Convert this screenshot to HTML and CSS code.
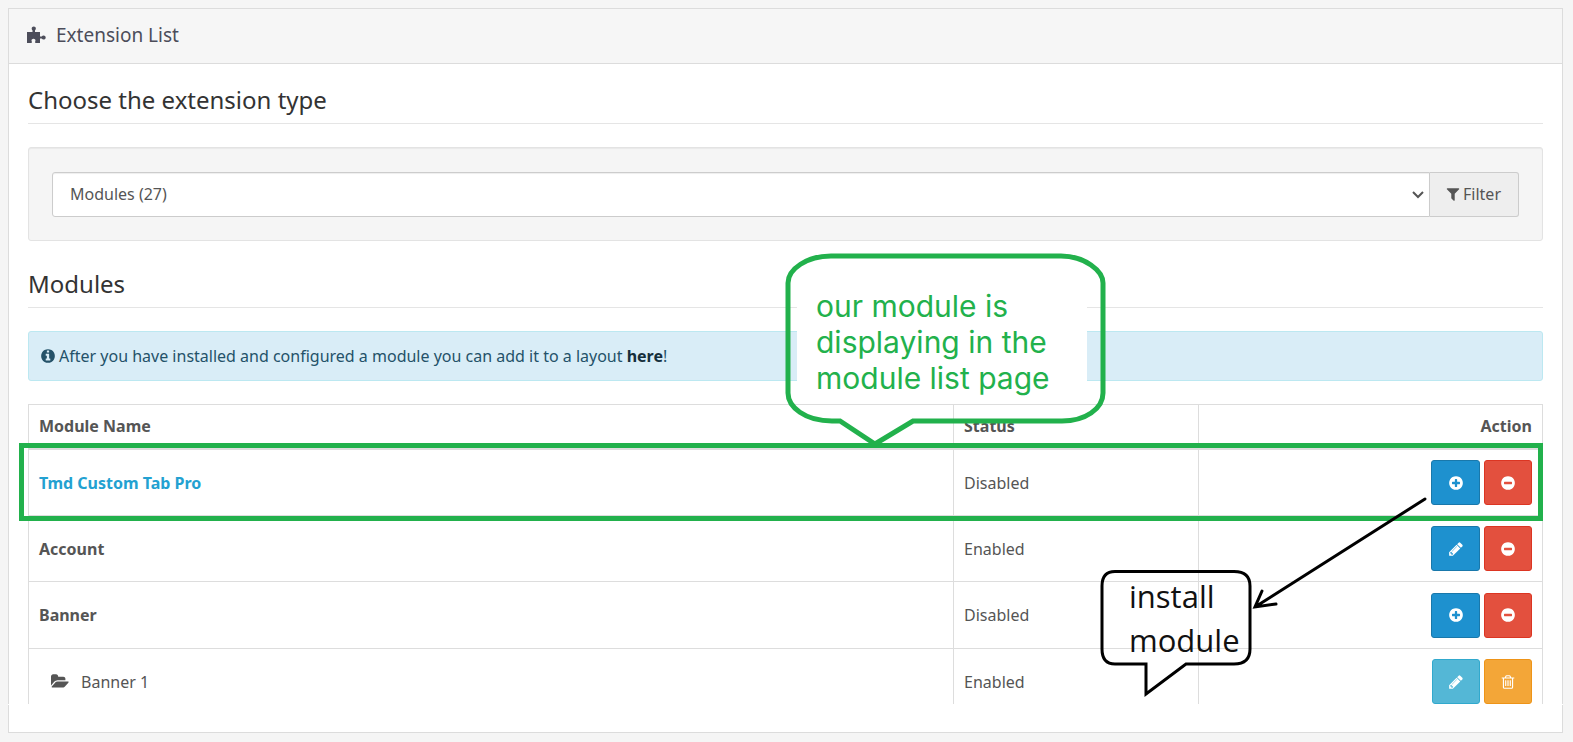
FILE: index.html
```html
<!DOCTYPE html>
<html lang="en">
<head>
<meta charset="utf-8">
<title>Extension List</title>
<link rel="stylesheet" href="styles.css">
</head>
<body>
<svg class="sprite" aria-hidden="true">
  <symbol id="plus" viewBox="0 0 1536 1792"><path d="M1216 960V832q0-26-19-45t-45-19H896V512q0-26-19-45t-45-19H704q-26 0-45 19t-19 45v256H384q-26 0-45 19t-19 45v128q0 26 19 45t45 19h256v256q0 26 19 45t45 19h128q26 0 45-19t19-45v-256h256q26 0 45-19t19-45zm320-64q0 209-103 385.500T1153.500 1561 768 1664t-385.500-103T103 1281.500 0 896t103-385.500T382.500 231 768 128t385.500 103T1433 510.500 1536 896z"/></symbol>
  <symbol id="minus" viewBox="0 0 1536 1792"><path d="M1216 960V832q0-26-19-45t-45-19H384q-26 0-45 19t-19 45v128q0 26 19 45t45 19h768q26 0 45-19t19-45zm320-64q0 209-103 385.500T1153.500 1561 768 1664t-385.500-103T103 1281.500 0 896t103-385.500T382.500 231 768 128t385.500 103T1433 510.500 1536 896z"/></symbol>
  <symbol id="pencil" viewBox="0 0 1536 1792"><path d="M363 1536l91-91-235-235-91 91v107h128v128h107zm523-928q0-22-22-22-10 0-17 7l-542 542q-7 7-7 17 0 22 22 22 10 0 17-7l542-542q7-7 7-17zm-54-192l416 416-832 832H0v-416zm683 96q0 53-37 90l-166 166-416-416 166-165q36-38 90-38 53 0 91 38l235 234q37 39 37 91z"/></symbol>
  <symbol id="trash" viewBox="0 0 1408 1792"><path d="M512 736v576q0 14-9 23t-23 9h-64q-14 0-23-9t-9-23V736q0-14 9-23t23-9h64q14 0 23 9t9 23zm256 0v576q0 14-9 23t-23 9h-64q-14 0-23-9t-9-23V736q0-14 9-23t23-9h64q14 0 23 9t9 23zm256 0v576q0 14-9 23t-23 9h-64q-14 0-23-9t-9-23V736q0-14 9-23t23-9h64q14 0 23 9t9 23zm128 724V512H256v948q0 22 7 40.500t14.500 27T288 1536h832q3 0 10.500-8.500t14.500-27 7-40.500zM480 384h448l-48-117q-7-9-17-11H546q-10 2-17 11zm928 32v64q0 14-9 23t-23 9h-96v948q0 83-47 143.500t-113 60.500H288q-66 0-113-58.500T128 1464V512H32q-14 0-23-9t-9-23v-64q0-14 9-23t23-9h309l70-167q15-37 54-63t79-26h320q40 0 79 26t54 63l70 167h309q14 0 23 9t9 23z"/></symbol>
  <symbol id="filter" viewBox="0 0 1408 1792"><path d="M1403 295q17 41-14 70L896 858v742q0 42-39 59-13 5-25 5-27 0-45-19l-256-256q-19-19-19-45V858L19 365q-31-29-14-70 17-39 59-39h1280q42 0 59 39z"/></symbol>
  <symbol id="info" viewBox="0 0 1536 1792"><path d="M1024 1376v-160q0-14-9-23t-23-9h-96V672q0-14-9-23t-23-9H544q-14 0-23 9t-9 23v160q0 14 9 23t23 9h96v320h-96q-14 0-23 9t-9 23v160q0 14 9 23t23 9h448q14 0 23-9t9-23zM896 480V320q0-14-9-23t-23-9H672q-14 0-23 9t-9 23v160q0 14 9 23t23 9h192q14 0 23-9t9-23zm640 416q0 209-103 385.500T1153.500 1561 768 1664t-385.500-103T103 1281.500 0 896t103-385.500T382.500 231 768 128t385.500 103T1433 510.500 1536 896z"/></symbol>
  <symbol id="folder" viewBox="0 0 1920 1792"><path d="M1879 952q0 31-31 66l-336 396q-43 51-120.500 86.500T1248 1536H160q-34 0-60.500-13T73 1480q0-31 31-66l336-396q43-51 120.500-86.500T704 896h1088q34 0 60.500 13t26.500 43zm-343-344v160H704q-94 0-197 47.500T343 935L6 1331l-5 6q0-4-.5-12.500T0 1312V352q0-92 66-158t158-66h320q92 0 158 66t66 158v32h544q92 0 158 66t66 158z"/></symbol>
  <symbol id="puzzle" viewBox="0 0 19 18"><path d="M0 6h5.500V4.300C4.300 3.400 4.300.5 6.800.5s2.500 2.900 1.200 3.800V6h5v4.400h1.700c1-1.500 4-1.200 4 1.100s-3 2.600-4 1.100H13V17H8.500c-.6-.6-.4-1.200-.1-1.900.5-1.400-.6-2.300-1.900-2.300s-2.400.9-1.900 2.300c.3.700.5 1.300-.1 1.900H0z"/></symbol>
</svg>

<main class="panel">
  <header class="panel-head">
    <svg class="icon-puzzle" aria-hidden="true"><use href="#puzzle"/></svg>
    <h1>Extension List</h1>
  </header>
  <div class="panel-body">
    <h2>Choose the extension type</h2>
    <form class="well">
      <div class="select-wrap">
        <select aria-label="Extension type"><option>Modules (27)</option></select>
        <svg class="chevron" viewBox="0 0 12 8" aria-hidden="true"><path d="M1 1l5 5 5-5"/></svg>
      </div>
      <button type="button" class="filter"><svg class="icon" aria-hidden="true"><use href="#filter"/></svg>Filter</button>
    </form>
    <h2>Modules</h2>
    <div class="alert">
      <svg class="icon" aria-hidden="true"><use href="#info"/></svg>
      <p>After you have installed and configured a module you can add it to a layout <a href="#layout">here</a>!</p>
    </div>

    <div class="list">
      <table>
        <thead>
          <tr><th class="name">Module Name</th><th class="status">Status</th><th class="action">Action</th></tr>
        </thead>
        <tbody>
          <tr>
            <td><a class="module-link" href="#tmd">Tmd Custom Tab Pro</a></td><td>Disabled</td>
            <td><div class="buttons"><button class="btn primary" aria-label="Install"><svg class="icon"><use href="#plus"/></svg></button><button class="btn danger" aria-label="Uninstall"><svg class="icon"><use href="#minus"/></svg></button></div></td>
          </tr>
          <tr>
            <td><b>Account</b></td><td>Enabled</td>
            <td><div class="buttons"><button class="btn primary" aria-label="Edit"><svg class="icon"><use href="#pencil"/></svg></button><button class="btn danger" aria-label="Uninstall"><svg class="icon"><use href="#minus"/></svg></button></div></td>
          </tr>
          <tr class="parent">
            <td><b>Banner</b></td><td>Disabled</td>
            <td><div class="buttons"><button class="btn primary" aria-label="Install"><svg class="icon"><use href="#plus"/></svg></button><button class="btn danger" aria-label="Uninstall"><svg class="icon"><use href="#minus"/></svg></button></div></td>
          </tr>
          <tr class="last">
            <td><div class="child"><svg class="icon-folder" aria-hidden="true"><use href="#folder"/></svg>Banner 1</div></td><td>Enabled</td>
            <td><div class="buttons"><button class="btn info" aria-label="Edit"><svg class="icon"><use href="#pencil"/></svg></button><button class="btn warning" aria-label="Delete"><svg class="icon"><use href="#trash"/></svg></button></div></td>
          </tr>
        </tbody>
      </table>

      <div class="highlight"></div>
      <div class="callout">
        <p>our module is<br>displaying in the<br>module list page</p>
        <svg viewBox="0 0 322 194" aria-hidden="true"><path d="M46 3H276C300 3 318 18 318 30V140C318 156 300 168 277 168H128L90 191L55 168H47C20 168 3 154 3 140V30C3 16 22 3 46 3Z"/></svg>
      </div>
      <div class="note">
        <svg viewBox="0 0 340 204" aria-hidden="true">
          <path d="M18 76.500H137Q153 76.500 153 91V154Q153 169 137 169H89L49 199V169H18Q5 169 5 154V91Q5 76.500 18 76.500Z"/>
          <path d="M328 4L158 112M165 96L158 112L179 109" stroke-linecap="round"/>
        </svg>
        <p>install<br>module</p>
      </div>
    </div>
  </div>
</main>
</body>
</html>
```
FILE: styles.css
```css
* { box-sizing: border-box; }

body {
  margin: 8px 10px 8px 8px;
  background: #f5f5f5;
  color: #555;
  font: 16px/22px "Noto Sans", "Open Sans", sans-serif;
}

h1, h2, p { margin: 0; font-weight: 400; }

.sprite { position: absolute; width: 0; height: 0; }

.icon { width: 14px; height: 16px; fill: currentColor; flex: none; }

.panel {
  position: relative;
  background: #fff;
  border: 1px solid #dcdcdc;
  box-shadow: 0 1px 1px rgba(0, 0, 0, .05);
}

.panel::after {
  content: "";
  position: absolute;
  left: -9px;
  right: -11px;
  bottom: 27px;
  height: 1px;
  background: #fff;
}

.panel-head {
  display: flex;
  align-items: center;
  gap: 10px;
  height: 55px;
  padding: 0 18px 2px;
  background: #f6f6f6;
  border-bottom: 1px solid #dcdcdc;
  color: #4c4d5a;
}

.panel-head h1 { font-size: 19px; line-height: 24px; }

.icon-puzzle { width: 19px; height: 18px; fill: currentColor; }

.panel-body { padding: 20px 19px 28px; }

h2 {
  padding-bottom: 7px;
  margin-bottom: 23px;
  border-bottom: 1px solid #e5e5e5;
  color: #333;
  font-size: 24px;
  line-height: 32px;
}

.well {
  display: flex;
  padding: 24px 23px 23px;
  margin: 0 0 27px;
  background: #f5f5f5;
  border: 1px solid #e3e3e3;
  border-radius: 3px;
  box-shadow: inset 0 1px 1px rgba(0, 0, 0, .05);
}

.select-wrap { position: relative; flex: 1; }

select {
  display: block;
  appearance: none;
  width: 100%;
  height: 45px;
  padding: 0 17px 2px;
  background: #fff;
  border: 1px solid #ccc;
  border-radius: 3px 0 0 3px;
  box-shadow: inset 0 1px 1px rgba(0, 0, 0, .07);
  color: #555;
  font: inherit;
}

.chevron {
  position: absolute;
  right: 6px;
  top: 19px;
  width: 12px;
  height: 8px;
  fill: none;
  stroke: #555;
  stroke-width: 2;
}

.filter {
  display: flex;
  align-items: center;
  gap: 3px;
  height: 45px;
  padding: 0 17px 2px 16px;
  background: #eee;
  border: 1px solid #ccc;
  border-left: 0;
  border-radius: 0 3px 3px 0;
  color: #555;
  font: inherit;
}

.alert {
  display: flex;
  align-items: center;
  gap: 4px;
  height: 50px;
  padding: 0 12px;
  margin-bottom: 23px;
  background: #d9edf7;
  border: 1px solid #bce8f1;
  border-radius: 3px;
  color: #245269;
}

.alert a { color: #152f3c; font-weight: 700; text-decoration: none; }

.list { position: relative; }

table {
  width: 100%;
  border-collapse: separate;
  border-spacing: 0;
  table-layout: fixed;
  border: solid #ddd;
  border-width: 1px 1px 0 0;
}

th, td {
  padding: 10px;
  border: solid #ddd;
  border-width: 0 0 1px 1px;
  text-align: left;
  vertical-align: middle;
}

th { height: 45px; padding-block: 8px 10px; border-bottom-width: 2px; }

.name { width: 61.1%; }
.status { width: 16.2%; }
.action { text-align: right; }

.parent td { height: 67px; }
.last td { padding-bottom: 0; border-bottom: 0; }

.module-link { color: #23a1d1; font-weight: 700; text-decoration: none; }

.child { display: flex; align-items: center; gap: 12px; padding-left: 12px; }

.icon-folder { width: 18px; height: 17px; fill: currentColor; }

.buttons { display: flex; justify-content: flex-end; gap: 4px; }

.btn {
  display: flex;
  align-items: center;
  justify-content: center;
  width: 48px;
  height: 45px;
  padding: 0;
  border: 1px solid;
  border-radius: 3px;
}

.btn .icon { fill: #fff; }

.btn.primary { width: 49px; }
.primary { background: #1e91cf; border-color: #1978ab; }
.danger { background: #e3503e; border-color: #dc3522; }
.info { background: #54b7d6; border-color: #31a9cd; }
.warning { background: #f3a638; border-color: #ee9418; }

.highlight {
  position: absolute;
  left: -9px;
  right: 0;
  top: 39px;
  height: 78px;
  border: 5px solid #22b14c;
}

.callout {
  position: absolute;
  top: -151px;
  right: 436px;
  width: 322px;
  height: 194px;
  padding: 35px 20px 0 12px;
}

.callout p {
  padding-left: 19px;
  background: #fff;
  color: #22b14c;
  font: 30px/36px Inter, sans-serif;
  white-space: nowrap;
}

.callout svg {
  position: absolute;
  inset: 0;
  fill: none;
  stroke: #22b14c;
  stroke-width: 5;
}

.note {
  position: absolute;
  top: 91px;
  right: 106px;
  width: 340px;
  height: 204px;
  padding: 79px 0 0 32px;
  color: #111;
  font: 31px/44px "Open Sans", sans-serif;
}

.note svg {
  position: absolute;
  inset: 0;
  fill: none;
  stroke: #000;
  stroke-width: 3;
}
```
